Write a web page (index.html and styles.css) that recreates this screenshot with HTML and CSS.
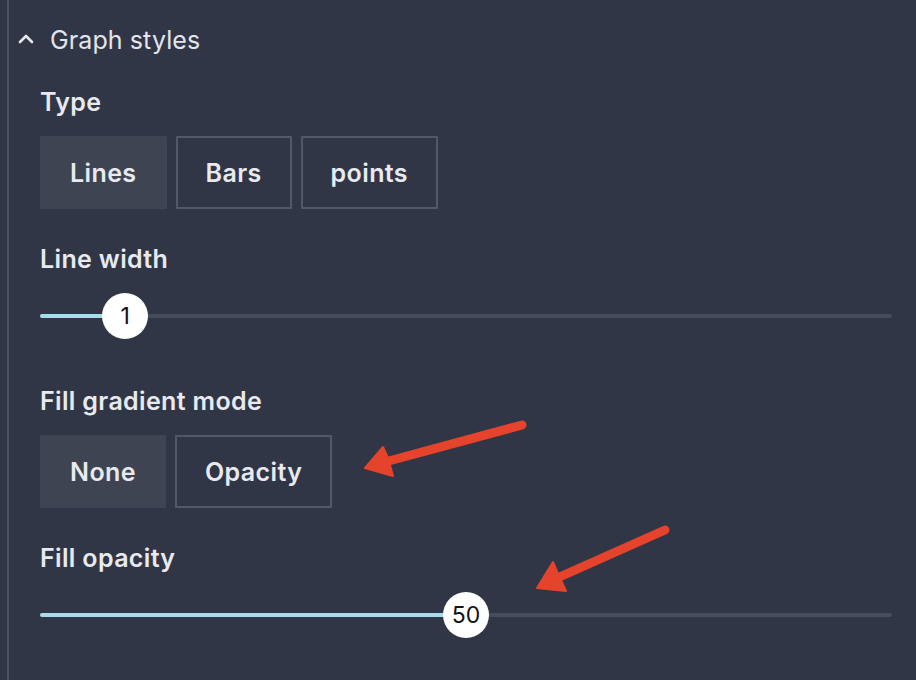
FILE: index.html
```html
<!DOCTYPE html>
<html>
<head>
<meta charset="utf-8">
<link rel="stylesheet" href="styles.css">
</head>
<body>
<div class="panel">
  <div class="section-header">
    <svg class="chevron" width="16" height="10" viewBox="0 0 16 10"><path d="M2 8 L8 2 L14 8" fill="none" stroke="#e4e7ee" stroke-width="2.6" stroke-linecap="round" stroke-linejoin="round"/></svg>
    <span class="section-title">Graph styles</span>
  </div>
  <div class="section-body">
    <div class="field field-after-buttons">
      <div class="label">Type</div>
      <div class="radio-group">
        <div class="radio active">Lines</div>
        <div class="radio">Bars</div>
        <div class="radio">points</div>
      </div>
    </div>
    <div class="field field-after-slider">
      <div class="label">Line width</div>
      <div class="slider">
        <div class="track">
          <div class="fill" style="width:10%"></div>
          <div class="thumb" style="left:10%">1</div>
        </div>
      </div>
    </div>
    <div class="field field-after-buttons">
      <div class="label">Fill gradient mode</div>
      <div class="radio-group">
        <div class="radio active">None</div>
        <div class="radio">Opacity</div>
      </div>
    </div>
    <div class="field">
      <div class="label">Fill opacity</div>
      <div class="slider">
        <div class="track">
          <div class="fill" style="width:50%"></div>
          <div class="thumb" style="left:50%">50</div>
        </div>
      </div>
    </div>
  </div>
</div>
<svg class="annotations" width="916" height="680" viewBox="0 0 916 680">
  <g fill="#e5432b" stroke="#e5432b" stroke-linecap="round" stroke-linejoin="round">
    <line x1="522" y1="425" x2="385" y2="462" stroke-width="9"/>
    <polygon points="365,468 383,447 388,458 393,476" stroke-width="2"/>
    <line x1="665" y1="530" x2="555" y2="579" stroke-width="9"/>
    <polygon points="537,588 553,562 558,574 566,591" stroke-width="2"/>
  </g>
</svg>
</body>
</html>
```
FILE: styles.css
```css
html, body {
  margin: 0;
  padding: 0;
  background: #313646;
  width: 916px;
  height: 680px;
  overflow: hidden;
  font-family: Inter, "Noto Sans", "Liberation Sans", sans-serif;
  color: #e8eaef;
}

.panel {
  margin-left: 7px;
  border-left: 2px solid #4b5161;
  height: 680px;
  box-sizing: border-box;
  padding-top: 25px;
}

.section-header {
  display: flex;
  align-items: center;
  height: 30px;
  padding-left: 9px;
}

.chevron {
  display: block;
  margin-right: 16px;
  margin-top: -2px;
}

.section-title {
  font-size: 25px;
  line-height: 30px;
  font-weight: 400;
  color: #e2e5ec;
  letter-spacing: 0.1px;
}

.section-body {
  padding-left: 31px;
  padding-right: 24px;
  padding-top: 32px;
}

.field {
  display: flex;
  flex-direction: column;
}

.field-after-buttons {
  margin-bottom: 35px;
}

.field-after-slider {
  margin-bottom: 47px;
}

.label {
  font-size: 25px;
  line-height: 30px;
  font-weight: 600;
  letter-spacing: 0.35px;
  color: #e8eaef;
  margin-bottom: 19px;
}

.radio-group {
  display: flex;
  gap: 9px;
}

.radio {
  height: 73px;
  box-sizing: border-box;
  padding: 0 28px;
  display: flex;
  align-items: center;
  justify-content: center;
  font-size: 25px;
  font-weight: 600;
  letter-spacing: 0.4px;
  color: #e8eaef;
  border: 2px solid #525866;
  border-radius: 1px;
}

.radio.active {
  background: #3e4452;
  border-color: #3e4452;
}

.slider {
  height: 46px;
  display: flex;
  align-items: center;
}

.track {
  position: relative;
  width: 852px;
  height: 4px;
  background: #464c5a;
  border-radius: 2px;
}

.fill {
  height: 4px;
  background: #a7dcec;
  border-radius: 2px;
}

.thumb {
  position: absolute;
  top: 50%;
  width: 46px;
  height: 46px;
  margin-left: -23px;
  margin-top: -23px;
  border-radius: 50%;
  background: #ffffff;
  color: #111318;
  font-size: 23px;
  font-weight: 400;
  display: flex;
  align-items: center;
  justify-content: center;
}

.annotations {
  position: absolute;
  left: 0;
  top: 0;
  pointer-events: none;
}
```
